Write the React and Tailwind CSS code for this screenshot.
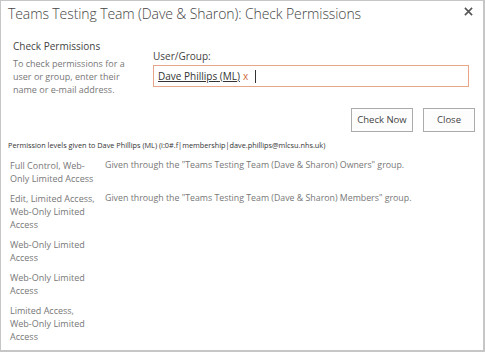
const rows = [
  ['Full Control, Web-Only Limited Access', 'Given through the "Teams Testing Team (Dave & Sharon) Owners" group.'],
  ['Edit, Limited Access, Web-Only Limited Access', 'Given through the "Teams Testing Team (Dave & Sharon) Members" group.'],
  ['Web-Only Limited Access', ''],
  ['Web-Only Limited Access', ''],
  ['Limited Access, Web-Only Limited Access', ''],
];

export default function App() {
  return (
    <div
      className="w-[485px] h-[352px] bg-white border border-[#c6c6c6] border-r-2 border-b-2 overflow-hidden relative"
      style={{ fontFamily: '"Open Sans", "Noto Sans", sans-serif' }}
    >
      {/* title */}
      <div className="flex items-start justify-between pl-[7px] pr-[10px] pt-[2px]">
        <h1 className="text-[14px] font-light text-[#444] tracking-[-0.1px]">
          Teams Testing Team (Dave &amp; Sharon): Check Permissions
        </h1>
        <button className="mt-[4px] text-[#555]">
          <svg width="9" height="9" viewBox="0 0 10 10">
            <path d="M1 1L9 9M9 1L1 9" stroke="currentColor" strokeWidth="1.8" />
          </svg>
        </button>
      </div>

      {/* form */}
      <div className="flex pl-[12px] pt-[15px]">
        <div className="w-[140px]">
          <div className="text-[10px] leading-[14px] text-[#444]">Check Permissions</div>
          <p className="mt-[4px] w-[132px] text-[9px] leading-[13px] text-[#777]">
            To check permissions for a user or group, enter their name or e-mail address.
          </p>
        </div>
        <div className="pt-[10px]">
          <div className="text-[10px] leading-[14px] text-[#444]">User/Group:</div>
          <div className="mt-[2px] w-[316px] h-[22px] border border-[#e8a587] flex items-center pl-[4px] text-[10px]">
            <span className="underline text-[#333]">Dave Phillips (ML)</span>
            <span className="ml-[3px] text-[#d06a3c]">x</span>
            <span className="ml-[7px] w-px h-[13px] bg-[#333]" />
          </div>
        </div>
      </div>

      <div className="flex justify-end gap-[10px] pr-[8px] mt-[12px]">
        <button className="w-[62px] h-[24px] border border-[#ababab] bg-[#fdfdfd] text-[9.5px] text-[#444]">
          Check Now
        </button>
        <button className="w-[52px] h-[24px] border border-[#ababab] bg-[#fdfdfd] text-[9.5px] text-[#444]">
          Close
        </button>
      </div>

      <div className="pl-[7px] mt-[8px] text-[7.3px] leading-[10px] text-[#333]">
        Permission levels given to Dave Phillips (ML) (i:0#.f|membership|dave.phillips@mlcsu.nhs.uk)
      </div>

      <div className="pl-[9px] mt-[9px] flex flex-col gap-[7px]">
        {rows.map(([lvl, how], i) => (
          <div key={i} className="flex text-[9px] leading-[13px] text-[#777]">
            <div className="w-[88px] shrink-0">{lvl}</div>
            <div className="pl-[7px] text-[8.8px]">{how}</div>
          </div>
        ))}
      </div>
    </div>
  );
}
